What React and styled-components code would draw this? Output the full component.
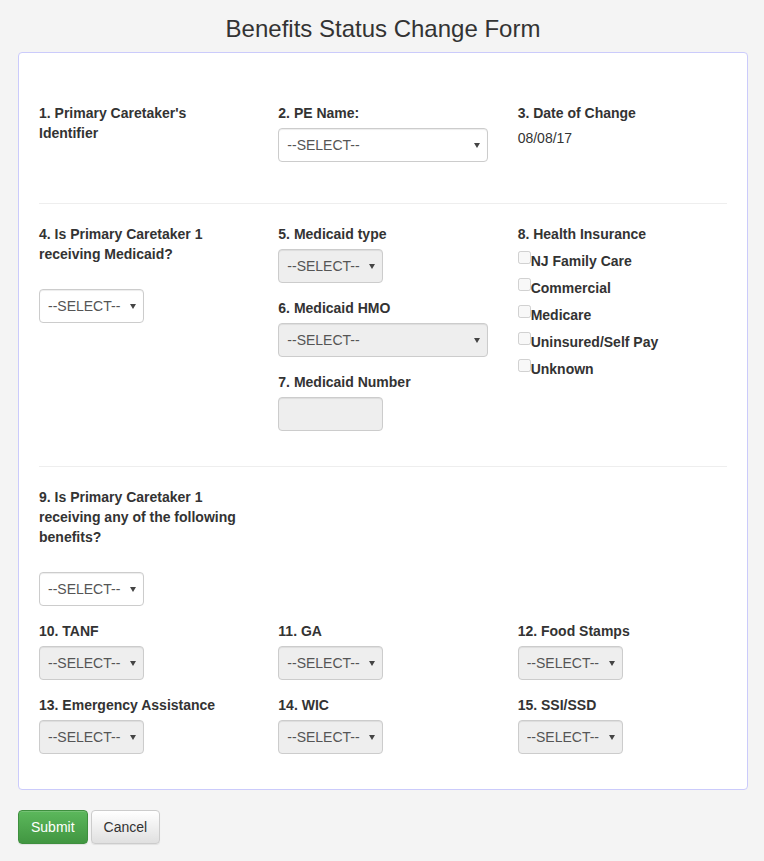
import React from "react";
import styled, { createGlobalStyle } from "styled-components";

const GlobalStyle = createGlobalStyle`
  body {
    margin: 0;
    background: #f4f4f4;
    font-family: "Liberation Sans", Arial, sans-serif;
    font-size: 14px;
    line-height: 20px;
    color: #333;
  }
  * { box-sizing: border-box; }
`;

const Page = styled.div`
  padding: 0 16px 20px 18px;
`;

const Title = styled.h2`
  margin: 16px 0 10px;
  font-size: 24px;
  line-height: 26px;
  font-weight: 500;
  text-align: center;
  color: #333;
`;

const Panel = styled.div`
  background: #fff;
  border: 1px solid #cbcbfb;
  border-radius: 4px;
  padding: 50px 20px 20px;
`;

const Grid = styled.div`
  display: grid;
  grid-template-columns: repeat(3, 1fr);
  column-gap: 30px;
  padding-bottom: ${(p) => p.$extra || 0}px;
`;

const Col = styled.div`
  display: flex;
  flex-direction: column;
`;

const Group = styled.div`
  margin-bottom: 15px;
`;

const Label = styled.label`
  display: block;
  font-weight: bold;
  margin-bottom: ${(p) => (p.$spaced ? 25 : 5)}px;
`;

const Static = styled.div`
  color: #333;
`;

const SelectWrap = styled.span`
  position: relative;
  display: ${(p) => (p.$full ? "block" : "inline-block")};
  &::after {
    content: "";
    position: absolute;
    right: 8px;
    top: 15px;
    border-left: 3.5px solid transparent;
    border-right: 3.5px solid transparent;
    border-top: 5px solid #444;
    pointer-events: none;
  }
`;

const Select = styled.select`
  display: block;
  width: ${(p) => (p.$full ? "100%" : "105px")};
  height: 34px;
  padding: 6px 22px 6px 8px;
  font-family: "Liberation Sans", Arial, sans-serif;
  font-size: 14px;
  color: #555;
  background-color: ${(p) => (p.disabled ? "#eee" : "#fff")};
  border: 1px solid #ccc;
  border-radius: 4px;
  box-shadow: inset 0 1px 1px rgba(0, 0, 0, 0.075);
  appearance: none;
  -webkit-appearance: none;
  opacity: 1;
`;

const TextInput = styled.input`
  display: block;
  width: 105px;
  height: 34px;
  padding: 6px 12px;
  font-size: 14px;
  background: #eee;
  border: 1px solid #ccc;
  border-radius: 4px;
  box-shadow: inset 0 1px 1px rgba(0, 0, 0, 0.075);
`;

const CheckList = styled.div`
  display: flex;
  flex-direction: column;
  gap: 7px;
  margin-top: 7px;
`;

const CheckItem = styled.label`
  display: flex;
  align-items: flex-start;
  font-weight: bold;
  input {
    width: 13px;
    height: 13px;
    margin: 0;
  }
`;

const Divider = styled.hr`
  border: 0;
  border-top: 1px solid #eee;
  margin: 20px 0;
`;

const Actions = styled.div`
  display: flex;
  gap: 3px;
  margin-top: 20px;
`;

const Button = styled.button`
  height: 34px;
  padding: 6px 12px;
  font-family: "Liberation Sans", Arial, sans-serif;
  font-size: 14px;
  border-radius: 4px;
  color: ${(p) => (p.$primary ? "#fff" : "#333")};
  border: 1px solid ${(p) => (p.$primary ? "#3e8f3e" : "#ccc")};
  background: ${(p) =>
    p.$primary
      ? "linear-gradient(to bottom, #5cb85c 0%, #419641 100%)"
      : "linear-gradient(to bottom, #fff 0%, #e0e0e0 100%)"};
  box-shadow: inset 0 1px 0 rgba(255, 255, 255, 0.15), 0 1px 1px rgba(0, 0, 0, 0.075);
`;

const Pick = ({ full, disabled }) => (
  <div>
    <SelectWrap $full={full}>
      <Select $full={full} disabled={disabled} defaultValue="">
        <option value="">--SELECT--</option>
      </Select>
    </SelectWrap>
  </div>
);

const insurance = ["NJ Family Care", "Commercial", "Medicare", "Uninsured/Self Pay", "Unknown"];

const benefits = [
  ["10. TANF", "11. GA", "12. Food Stamps"],
  ["13. Emergency Assistance", "14. WIC", "15. SSI/SSD"],
];

export default function App() {
  return (
    <Page>
      <GlobalStyle />
      <Title>Benefits Status Change Form</Title>
      <Panel>
        <Grid $extra={6}>
          <Col>
            <Group>
              <Label>1. Primary Caretaker's Identifier</Label>
            </Group>
          </Col>
          <Col>
            <Group>
              <Label>2. PE Name:</Label>
              <Pick full />
            </Group>
          </Col>
          <Col>
            <Group>
              <Label>3. Date of Change</Label>
              <Static>08/08/17</Static>
            </Group>
          </Col>
        </Grid>
        <Divider />
        <Grid>
          <Col>
            <Group>
              <Label $spaced>4. Is Primary Caretaker 1 receiving Medicaid?</Label>
              <Pick />
            </Group>
          </Col>
          <Col>
            <Group>
              <Label>5. Medicaid type</Label>
              <Pick disabled />
            </Group>
            <Group>
              <Label>6. Medicaid HMO</Label>
              <Pick full disabled />
            </Group>
            <Group>
              <Label>7. Medicaid Number</Label>
              <TextInput disabled />
            </Group>
          </Col>
          <Col>
            <Group>
              <Label>8. Health Insurance</Label>
              <CheckList>
                {insurance.map((name) => (
                  <CheckItem key={name}>
                    <input type="checkbox" disabled />
                    {name}
                  </CheckItem>
                ))}
              </CheckList>
            </Group>
          </Col>
        </Grid>
        <Divider />
        <Grid>
          <Col>
            <Group>
              <Label $spaced>9. Is Primary Caretaker 1 receiving any of the following benefits?</Label>
              <Pick />
            </Group>
          </Col>
          <Col />
          <Col />
          {benefits.flat().map((name) => (
            <Col key={name}>
              <Group>
                <Label>{name}</Label>
                <Pick disabled />
              </Group>
            </Col>
          ))}
        </Grid>
      </Panel>
      <Actions>
        <Button $primary>Submit</Button>
        <Button>Cancel</Button>
      </Actions>
    </Page>
  );
}
